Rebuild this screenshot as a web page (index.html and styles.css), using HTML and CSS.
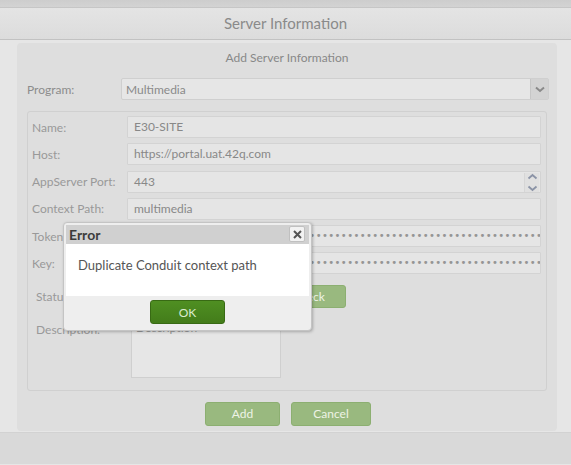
FILE: index.html
```html
<!DOCTYPE html>
<html>
<head>
<meta charset="utf-8">
<link rel="stylesheet" href="styles.css">
</head>
<body>
<div class="topstrip"></div>
<div class="header">Server Information</div>
<div class="main">
  <div class="panel">
    <div class="panel-title">Add Server Information</div>
    <div class="program-row">
      <span class="plabel">Program:</span>
      <div class="select">
        <span class="select-text">Multimedia</span>
        <span class="select-btn">
          <svg width="10" height="7" viewBox="0 0 10 7"><path d="M1 1.5 L5 5 L9 1.5" fill="none" stroke="#8a8a8a" stroke-width="2"/></svg>
        </span>
      </div>
    </div>
    <div class="fieldset">
      <div class="row"><span class="label">Name:</span><div class="input">E30-SITE</div></div>
      <div class="row"><span class="label">Host:</span><div class="input">https://portal.uat.42q.com</div></div>
      <div class="row"><span class="label">AppServer Port:</span><div class="input spin">443
        <span class="spinner">
          <svg width="11" height="7" viewBox="0 0 11 7"><path d="M1.5 5.5 L5.5 2 L9.5 5.5" fill="none" stroke="#8b93a6" stroke-width="1.8"/></svg>
          <svg width="11" height="7" viewBox="0 0 11 7"><path d="M1.5 1.5 L5.5 5 L9.5 1.5" fill="none" stroke="#8b93a6" stroke-width="1.8"/></svg>
        </span></div></div>
      <div class="row"><span class="label">Context Path:</span><div class="input">multimedia</div></div>
      <div class="row"><span class="label">Token:</span><div class="input dots">••••••••••••••••••••••••••••••••••••••••••••••••••••••••••••••••••••••••</div></div>
      <div class="row"><span class="label">Key:</span><div class="input dots">••••••••••••••••••••••••••••••••••••••••••••••••••••••••••••••••••••••••</div></div>
      <div class="status-row"><span class="label2">Status:</span><span class="gbtn check">Check</span></div>
      <div class="desc-row"><span class="label2">Description:</span><div class="textarea">Description</div></div>
    </div>
    <div class="actions">
      <span class="gbtn add">Add</span>
      <span class="gbtn cancel">Cancel</span>
    </div>
  </div>
</div>
<div class="bottomstrip"></div>

<div class="dialog">
  <div class="dlg-title">Error
    <span class="close">
      <svg width="11" height="11" viewBox="0 0 11 11"><path d="M2 2 L9 9 M9 2 L2 9" stroke="#555" stroke-width="2"/></svg>
    </span>
  </div>
  <div class="dlg-body">Duplicate Conduit context path</div>
  <div class="dlg-foot"><span class="okbtn">OK</span></div>
</div>
</body>
</html>
```
FILE: styles.css
```css
* { box-sizing: border-box; }
body {
  margin: 0;
  width: 571px;
  height: 465px;
  background: #e6e6e6;
  font-family: "Lato", "Open Sans", sans-serif;
  font-size: 12px;
  color: #8c8c8c;
  position: relative;
  overflow: hidden;
}
.topstrip {
  height: 8px;
  background: linear-gradient(#cdcdcd, #d3d3d3);
  border-bottom: 1px solid #c6c6c6;
}
.header {
  height: 32px;
  background: linear-gradient(#e4e4e4, #dcdcdc);
  border-bottom: 1px solid #c2c2c2;
  text-align: center;
  line-height: 30px;
  font-size: 15px;
  color: #8a8a8a;
}
.main {
  height: 392px;
  padding: 3px 14px 0 17px;
}
.panel {
  height: 388px;
  background: #dedede;
  border-radius: 4px;
  padding: 0 10px 0 10px;
  display: flex;
  flex-direction: column;
}
.panel-title {
  text-align: center;
  height: 36px;
  line-height: 30px;
  font-size: 12px;
  color: #888;
}
.program-row {
  display: flex;
  align-items: center;
  height: 22px;
  margin-right: -2px;
  margin-top: -1px;
}
.plabel { width: 94px; color: #8c8c8c; }
.select {
  flex: 1;
  height: 22px;
  background: #e6e6e6;
  border: 1px solid #cfcfcf;
  border-radius: 2px;
  display: flex;
  align-items: center;
  padding-left: 4px;
  color: #8a8a8a;
}
.select-text { flex: 1; }
.select-btn {
  width: 18px;
  height: 20px;
  background: #d3d3d3;
  border-left: 1px solid #c6c6c6;
  display: flex;
  align-items: center;
  justify-content: center;
}
.fieldset {
  margin-top: 11px;
  height: 280px;
  border: 1px solid #d0d0d0;
  border-radius: 3px;
  padding: 4px 5px 0 4px;
  display: flex;
  flex-direction: column;
  gap: 5.3px;
}
.row {
  display: flex;
  align-items: center;
  height: 22px;
}
.label { width: 95px; color: #999; }
.input {
  flex: 1;
  height: 22px;
  background: #e5e5e5;
  border: 1px solid #d3d3d3;
  border-radius: 1px;
  padding-left: 6px;
  line-height: 20px;
  color: #888;
  position: relative;
  white-space: nowrap;
  overflow: hidden;
}
.input.dots {
  letter-spacing: 0.4px;
  font-size: 10px;
  color: #959595;
  padding-left: 5px;
  font-family: "DejaVu Sans", sans-serif;
}
.spinner {
  position: absolute;
  right: 1px;
  top: 1px;
  width: 15px;
  height: 19px;
  display: flex;
  flex-direction: column;
  align-items: center;
  justify-content: space-between;
  background: #e0e0e0;
  border-left: 1px solid #d6d6d6;
}
.status-row {
  display: flex;
  align-items: center;
  height: 22px;
  margin-top: 6px;
}
.label2 { width: 239px; padding-left: 4px; color: #999; }
.gbtn {
  display: inline-block;
  height: 24px;
  line-height: 22px;
  text-align: center;
  background: #99b97f;
  border: 1px solid #8caf71;
  border-radius: 3px;
  color: #eef3e6;
  font-size: 12px;
}
.check { width: 75px; height: 23px; }
.desc-row {
  display: flex;
  margin-top: 4px;
}
.desc-row .label2 { width: 99px; padding-top: 5px; }
.textarea {
  width: 150px;
  height: 61px;
  background: #e6e6e6;
  border: 1px solid #cfcfcf;
  padding: 2px 4px;
  color: #999;
}
.actions {
  display: flex;
  justify-content: center;
  gap: 11px;
  margin-top: 11px;
  padding-left: 2px;
}
.add { width: 75px; }
.cancel { width: 80px; }
.bottomstrip {
  height: 32px;
  background: #d9d9d9;
  border-top: 1px solid #d2d2d2;
}
.dialog {
  position: absolute;
  left: 63px;
  top: 222px;
  width: 249px;
  height: 109px;
  background: #eeeeee;
  border: 1px solid #c4c4c4;
  border-radius: 4px;
  box-shadow: 1px 1px 3px rgba(0,0,0,0.25);
  padding: 2px 2px 0 2px;
  display: flex;
  flex-direction: column;
}
.dlg-title {
  height: 19px;
  background: #d0d0d0;
  color: #3c3c3c;
  font-size: 14px;
  font-weight: bold;
  line-height: 19px;
  padding-left: 3px;
  position: relative;
}
.close {
  position: absolute;
  right: 4px;
  top: 1px;
  width: 16px;
  height: 16px;
  background: #f2f2f2;
  border: 1px solid #c0c0c0;
  border-radius: 2px;
  display: flex;
  align-items: center;
  justify-content: center;
}
.dlg-body {
  height: 52px;
  background: #ffffff;
  color: #555;
  font-size: 13px;
  padding: 13px 0 0 12px;
}
.dlg-foot {
  display: flex;
  justify-content: center;
  padding-top: 4px;
}
.okbtn {
  width: 75px;
  height: 24px;
  line-height: 23px;
  text-align: center;
  background: linear-gradient(#4f8f22, #437c1a);
  border: 1px solid #386a14;
  border-radius: 3px;
  color: #d9ebcd;
  font-size: 12px;
}
```
